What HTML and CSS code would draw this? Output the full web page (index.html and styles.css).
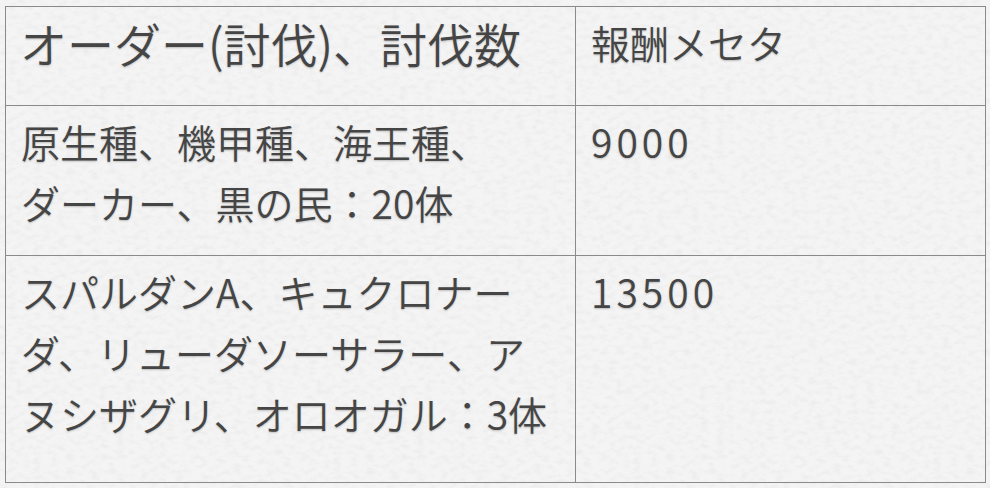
FILE: index.html
```html
<!DOCTYPE html>
<html lang="ja">
<head>
<meta charset="utf-8">
<link rel="stylesheet" href="styles.css">
</head>
<body>
<div class="page">
  <div class="table">
    <div class="cell head head-main">オーダー(討伐)、討伐数</div>
    <div class="cell head head-sub">報酬メセタ</div>
    <div class="cell">原生種、機甲種、海王種、<br>ダーカー、黒の民：20体</div>
    <div class="cell num">9000</div>
    <div class="cell">スパルダンA、キュクロナー<br>ダ、リューダソーサラー、ア<br>ヌシザグリ、オロオガル：3体</div>
    <div class="cell num">13500</div>
  </div>
</div>
</body>
</html>
```

FILE: styles.css
```css
html, body {
  margin: 0;
  padding: 0;
  width: 990px;
  height: 488px;
  overflow: hidden;
}
body {
  background-color: #f4f4f4;
  background-image: url("data:image/svg+xml;utf8,<svg xmlns='http://www.w3.org/2000/svg' width='300' height='300'><filter id='n'><feTurbulence type='fractalNoise' baseFrequency='0.12 0.2' numOctaves='3' seed='5'/><feColorMatrix type='matrix' values='0 0 0 0 0  0 0 0 0 0  0 0 0 0 0  0 0 0 1 -0.45'/></filter><rect width='300' height='300' filter='url(%23n)' opacity='0.07'/></svg>");
  font-family: "Noto Sans CJK JP", "Noto Sans", sans-serif;
  font-weight: 350;
  color: #454545;
}
.page {
  padding: 6px 5px;
}
.table {
  display: grid;
  grid-template-columns: 570px 410px;
  grid-template-rows: 99px 150px 227px;
  width: 980px;
  border-left: 1px solid #8a8a8a;
  border-top: 1px solid #8a8a8a;
}
.cell {
  border-right: 1px solid #8a8a8a;
  border-bottom: 1px solid #8a8a8a;
  padding: 5px 0 0 15px;
  font-size: 39px;
  line-height: 61px;
  white-space: nowrap;
  text-shadow: 0 1px 2px rgba(0, 0, 0, 0.22);
}
.head {
  padding-top: 5px;
}
.head-main {
  font-size: 47px;
  line-height: 61px;
  padding-left: 14px;
}
.head-sub {
  font-size: 39px;
}
.num {
  letter-spacing: 4px;
}
```
